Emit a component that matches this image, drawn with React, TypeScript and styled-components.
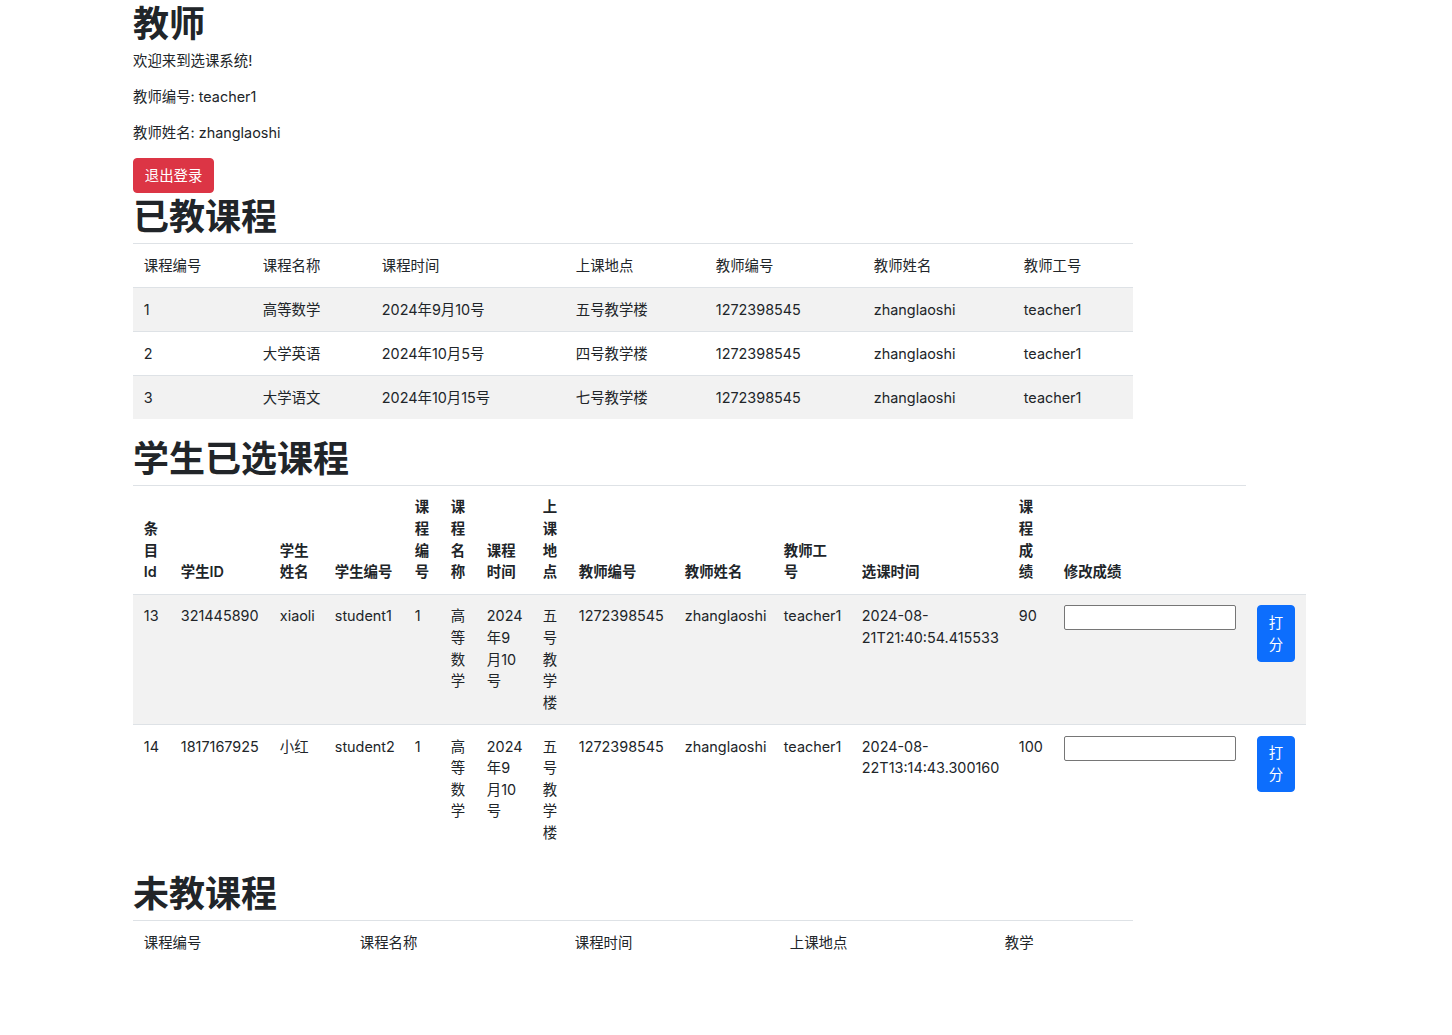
import React from "react";
import styled, { createGlobalStyle } from "styled-components";

const GlobalStyle = createGlobalStyle`
  html, body {
    margin: 0;
    padding: 0;
    background: #fff;
  }

  body {
    font-family: Inter, "Noto Sans CJK SC", sans-serif;
    font-size: 14.4px;
    line-height: 1.5;
    color: #212529;
  }

  * {
    box-sizing: border-box;
  }
`;

const Page = styled.div`
  width: 1186px;
  margin: 0 auto;
  padding-bottom: 40px;
`;

const Heading = styled.h1`
  margin: 0 0 8px;
  font-family: "Noto Sans CJK SC", sans-serif;
  font-size: 36px;
  font-weight: 600;
  line-height: 42px;
  color: #212529;
`;

const Text = styled.p`
  margin: 0 0 14.4px;
`;

const Actions = styled.div`
  display: flex;
  align-items: flex-start;
`;

const Button = styled.button<{ $variant: "danger" | "primary" }>`
  display: inline-block;
  vertical-align: top;
  padding: 5.7px 10.8px;
  border: 1px solid ${(p) => (p.$variant === "danger" ? "#dc3545" : "#0d6efd")};
  border-radius: 4px;
  background: ${(p) => (p.$variant === "danger" ? "#dc3545" : "#0d6efd")};
  color: #fff;
  font-family: inherit;
  font-size: 14.4px;
  line-height: 1.5;
  cursor: pointer;
`;

const Table = styled.table<{ $width: number }>`
  width: ${(p) => p.$width}px;
  table-layout: fixed;
  border-collapse: collapse;
  margin-bottom: 16px;

  tbody tr:nth-child(odd) > td {
    background: #f2f2f2;
  }
`;

const Col = styled.col<{ $w: number }>`
  width: ${(p) => p.$w}px;
`;

const HeadCell = styled.th<{ $bold?: boolean }>`
  padding: 10.8px;
  border-top: 1px solid #dee2e6;
  text-align: left;
  vertical-align: bottom;
  font-weight: ${(p) => (p.$bold ? 600 : 400)};
`;

const Cell = styled.td`
  padding: 10.8px 10.8px 10.4px;
  border-top: 1px solid #dee2e6;
  vertical-align: top;
`;

const ScoreInput = styled.input`
  display: block;
  width: 172px;
  height: 25px;
  padding: 1px 2px;
  border: 1px solid #767676;
  border-radius: 2px;
  background: #fff;
  font-family: inherit;
  font-size: 13.3px;
`;

const taughtCols = [119, 119, 194, 140, 158, 150, 120];
const taughtHead = ["课程编号", "课程名称", "课程时间", "上课地点", "教师编号", "教师姓名", "教师工号"];
const taught = [
  ["1", "高等数学", "2024年9月10号", "五号教学楼", "1272398545", "zhanglaoshi", "teacher1"],
  ["2", "大学英语", "2024年10月5号", "四号教学楼", "1272398545", "zhanglaoshi", "teacher1"],
  ["3", "大学语文", "2024年10月15号", "七号教学楼", "1272398545", "zhanglaoshi", "teacher1"],
];

const chosenCols = [37, 99, 55, 80, 36, 36, 56, 36, 106, 99, 78, 157, 45, 193, 60];
const chosenHead = [
  "条目Id",
  "学生ID",
  "学生姓名",
  "学生编号",
  "课程编号",
  "课程名称",
  "课程时间",
  "上课地点",
  "教师编号",
  "教师姓名",
  "教师工号",
  "选课时间",
  "课程成绩",
  "修改成绩",
];
const chosen = [
  ["13", "321445890", "xiaoli", "student1", "1", "高等数学", "2024年9月10号", "五号教学楼", "1272398545", "zhanglaoshi", "teacher1", "2024-08-21T21:40:54.415533", "90"],
  ["14", "1817167925", "小红", "student2", "1", "高等数学", "2024年9月10号", "五号教学楼", "1272398545", "zhanglaoshi", "teacher1", "2024-08-22T13:14:43.300160", "100"],
];

const untaughtCols = [216, 215, 215, 215, 139];
const untaughtHead = ["课程编号", "课程名称", "课程时间", "上课地点", "教学"];

const App = () => {
  return (
    <>
      <GlobalStyle />
      <Page>
        <Heading>教师</Heading>
        <Text>欢迎来到选课系统!</Text>
        <Text>教师编号: teacher1</Text>
        <Text>教师姓名: zhanglaoshi</Text>
        <Actions>
          <Button $variant="danger">退出登录</Button>
        </Actions>

        <Heading>已教课程</Heading>
        <Table $width={1000}>
          <colgroup>
            {taughtCols.map((w, i) => (
              <Col key={i} $w={w} />
            ))}
          </colgroup>
          <thead>
            <tr>
              {taughtHead.map((h) => (
                <HeadCell key={h}>{h}</HeadCell>
              ))}
            </tr>
          </thead>
          <tbody>
            {taught.map((row) => (
              <tr key={row[0]}>
                {row.map((c, i) => (
                  <Cell key={i}>{c}</Cell>
                ))}
              </tr>
            ))}
          </tbody>
        </Table>

        <Heading>学生已选课程</Heading>
        <Table $width={1173}>
          <colgroup>
            {chosenCols.map((w, i) => (
              <Col key={i} $w={w} />
            ))}
          </colgroup>
          <thead>
            <tr>
              {chosenHead.map((h) => (
                <HeadCell key={h} $bold>
                  {h}
                </HeadCell>
              ))}
            </tr>
          </thead>
          <tbody>
            {chosen.map((row) => (
              <tr key={row[0]}>
                {row.map((c, i) => (
                  <Cell key={i}>{c}</Cell>
                ))}
                <Cell>
                  <ScoreInput type="text" />
                </Cell>
                <Cell>
                  <Button $variant="primary">打分</Button>
                </Cell>
              </tr>
            ))}
          </tbody>
        </Table>

        <Heading>未教课程</Heading>
        <Table $width={1000}>
          <colgroup>
            {untaughtCols.map((w, i) => (
              <Col key={i} $w={w} />
            ))}
          </colgroup>
          <thead>
            <tr>
              {untaughtHead.map((h) => (
                <HeadCell key={h}>{h}</HeadCell>
              ))}
            </tr>
          </thead>
          <tbody />
        </Table>
      </Page>
    </>
  );
};

export default App;
